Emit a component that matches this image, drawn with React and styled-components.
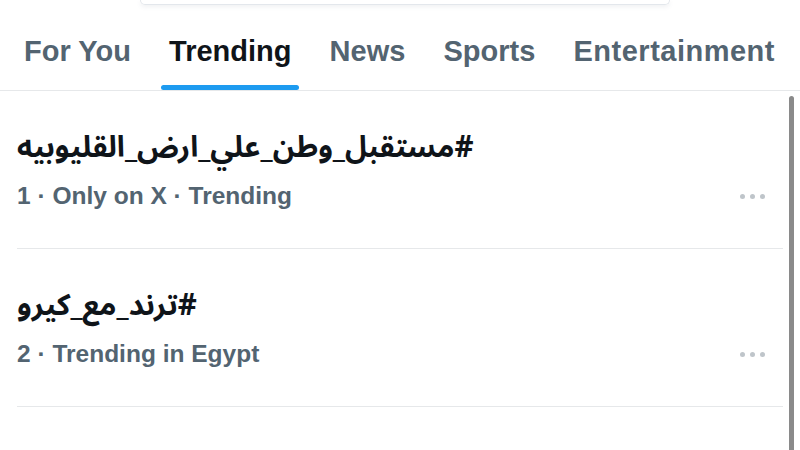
import React from "react";
import styled, { createGlobalStyle } from "styled-components";

const Global = createGlobalStyle`
  html, body { margin: 0; padding: 0; background: #ffffff; }
  body { width: 800px; height: 450px; overflow: hidden; font-family: "Liberation Sans", Arial, sans-serif; }
`;

const Page = styled.div`
  width: 800px;
  height: 450px;
  overflow: hidden;
  display: flex;
  flex-direction: column;
  background: #fff;
`;

const SearchStub = styled.div`
  height: 4px;
  margin: 0 130px 0 140px;
  border: 1px solid #e3e7ec;
  border-top: none;
  border-radius: 0 0 22px 22px;
  box-shadow: 0 2px 4px rgba(120, 130, 150, 0.12);
`;

const TabBar = styled.nav`
  display: flex;
  justify-content: space-between;
  padding: 29px 17px 0 16px;
  border-bottom: 1px solid #e6e8ea;
`;

const Tab = styled.div`
  display: flex;
  flex-direction: column;
  align-items: stretch;
`;

const TabLabel = styled.span`
  padding: 0 8px;
  font-size: 29px;
  line-height: 34px;
  font-weight: 700;
  letter-spacing: ${(p) => (p.$wide ? "0.5px" : "0")};
  color: ${(p) => (p.$active ? "#0f1419" : "#536471")};
  white-space: nowrap;
`;

const Indicator = styled.div`
  height: 5px;
  margin-top: 17px;
  border-radius: 3px;
  background: ${(p) => (p.$active ? "#1d9bf0" : "transparent")};
`;

const Body = styled.div`
  flex: 1;
  display: flex;
  min-height: 0;
`;

const List = styled.div`
  flex: 1;
  padding-left: 17px;
`;

const Row = styled.div`
  display: flex;
  flex-direction: column;
  padding: 37px 18px 0 0;
  height: 158px;
  box-sizing: border-box;
  border-bottom: 1px solid #e6e8ea;
`;

const Hashtag = styled.div`
  font-family: "Noto Sans Arabic", "Noto Naskh Arabic", "DejaVu Sans", sans-serif;
  font-size: 29.5px;
  line-height: 40px;
  font-weight: 700;
  color: #0f1419;
  text-align: left;
`;

const MetaLine = styled.div`
  display: flex;
  align-items: center;
  justify-content: space-between;
  margin-top: 13px;
`;

const Meta = styled.span`
  font-size: 24.5px;
  line-height: 30px;
  font-weight: 700;
  color: #536471;
`;

const More = styled.div`
  display: flex;
  gap: 5px;
`;

const Dot = styled.span`
  width: 5px;
  height: 5px;
  border-radius: 50%;
  background: #bfc5ca;
`;

const Track = styled.div`
  width: 17px;
  display: flex;
  justify-content: center;
  padding-top: 5px;
  box-sizing: border-box;
`;

const Thumb = styled.div`
  width: 5px;
  height: 100%;
  border-radius: 3px 3px 0 0;
  background: #8a8a8a;
`;

const tabs = ["For You", "Trending", "News", "Sports", "Entertainment"];

const trends = [
  { tag: "#مستقبل_وطن_علي_ارض_القليوبيه", meta: "1 · Only on X · Trending" },
  { tag: "#ترند_مع_كيرو", meta: "2 · Trending in Egypt" },
];

export default function App() {
  return (
    <>
      <Global />
      <Page>
        <SearchStub />
        <TabBar>
          {tabs.map((t) => (
            <Tab key={t}>
              <TabLabel $active={t === "Trending"} $wide={t === "Entertainment"}>
                {t}
              </TabLabel>
              <Indicator $active={t === "Trending"} />
            </Tab>
          ))}
        </TabBar>
        <Body>
          <List>
            {trends.map((r) => (
              <Row key={r.tag}>
                <Hashtag dir="auto">{r.tag}</Hashtag>
                <MetaLine>
                  <Meta>{r.meta}</Meta>
                  <More>
                    <Dot />
                    <Dot />
                    <Dot />
                  </More>
                </MetaLine>
              </Row>
            ))}
          </List>
          <Track>
            <Thumb />
          </Track>
        </Body>
      </Page>
    </>
  );
}
